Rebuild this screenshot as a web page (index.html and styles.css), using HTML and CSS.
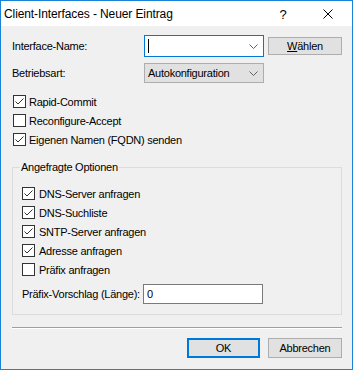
FILE: index.html
```html
<!DOCTYPE html>
<html>
<head>
  <meta charset="UTF-8">
  <link rel="stylesheet" href="styles.css">
  <title>Client-Interfaces - Neuer Eintrag</title>
</head>
<body>
  <div class="window">
    <div class="titlebar">
      <span class="title">Client-Interfaces - Neuer Eintrag</span>
      <span class="tbtn">?</span>
      <span class="tbtn close">
        <svg width="10" height="10" viewBox="0 0 10 10"><path d="M0.5 0.5 L9.5 9.5 M9.5 0.5 L0.5 9.5" stroke="#000" stroke-width="1" fill="none"/></svg>
      </span>
    </div>

    <div class="content">
      <div class="row first">
        <span class="label">Interface-Name:</span>
        <div class="combo focus">
          <span class="caret"></span>
          <svg class="chev" width="9" height="5" viewBox="0 0 9 5"><path d="M0.5 0.5 L4.5 4.5 L8.5 0.5" stroke="#606060" fill="none"/></svg>
        </div>
        <button class="btn pick"><u>W</u>ählen</button>
      </div>

      <div class="row second">
        <span class="label">Betriebsart:</span>
        <div class="combo grey">
          <span class="val">Autokonfiguration</span>
          <svg class="chev" width="9" height="5" viewBox="0 0 9 5"><path d="M0.5 0.5 L4.5 4.5 L8.5 0.5" stroke="#606060" fill="none"/></svg>
        </div>
      </div>

      <div class="checks top">
        <label class="check on"><span class="box"></span>Rapid-Commit</label>
        <label class="check"><span class="box"></span>Reconfigure-Accept</label>
        <label class="check on"><span class="box"></span>Eigenen Namen (FQDN) senden</label>
      </div>

      <fieldset class="group">
        <legend>Angefragte Optionen</legend>
        <label class="check on"><span class="box"></span>DNS-Server anfragen</label>
        <label class="check on"><span class="box"></span>DNS-Suchliste</label>
        <label class="check on"><span class="box"></span>SNTP-Server anfragen</label>
        <label class="check on"><span class="box"></span>Adresse anfragen</label>
        <label class="check"><span class="box"></span>Präfix anfragen</label>
        <div class="row prefix">
          <span class="label narrow">Präfix-Vorschlag (Länge):</span>
          <div class="field">0</div>
        </div>
      </fieldset>

      <div class="sep"></div>

      <div class="buttons">
        <button class="btn default">OK</button>
        <button class="btn">Abbrechen</button>
      </div>
    </div>
  </div>
</body>
</html>
```

FILE: styles.css
```css
html, body {
  margin: 0;
  padding: 0;
  background: #f0f0f0;
}

.window {
  width: 353px;
  height: 370px;
  box-sizing: border-box;
  border: 1px solid #1883d7;
  background: #f0f0f0;
  font-family: "Liberation Sans", Arial, sans-serif;
  font-size: 11px;
  letter-spacing: -0.25px;
  color: #000;
}

.titlebar {
  height: 25px;
  background: #fff;
  display: flex;
  align-items: center;
}

.title {
  flex: 1;
  padding-left: 3px;
  padding-top: 1px;
  font-size: 12px;
  letter-spacing: -0.1px;
}

.tbtn {
  width: 46px;
  height: 25px;
  display: flex;
  align-items: center;
  justify-content: center;
  font-size: 13px;
  padding-top: 1px;
  box-sizing: border-box;
}

.tbtn.close {
  padding-top: 0;
  padding-right: 2px;
}

.content {
  padding: 0 10px 0 11px;
}

.row {
  display: flex;
  align-items: center;
}

.row.first {
  margin-top: 9px;
  height: 22px;
}

.row.second {
  margin-top: 6px;
  height: 20px;
}

.label {
  width: 132px;
  flex: none;
}

.label.narrow {
  width: 121px;
}

.combo {
  width: 120px;
  box-sizing: border-box;
  display: flex;
  align-items: center;
  padding: 0 5px 0 3px;
}

.combo.focus {
  height: 22px;
  border: 1px solid #0078d7;
  background: #fff;
}

.combo.grey {
  height: 20px;
  border: 1px solid #adadad;
  background: #e1e1e1;
}

.caret {
  width: 1px;
  height: 14px;
  background: #000;
  margin-left: 0;
}

.val {
  padding-left: 0;
}

.chev {
  margin-left: auto;
}

.btn {
  font-family: inherit;
  font-size: 11px;
  letter-spacing: -0.25px;
  color: #000;
  background: #e1e1e1;
  border: 1px solid #adadad;
  height: 20px;
  width: 74px;
  padding: 0;
  margin: 0;
}

.btn.pick {
  height: 18px;
  margin-left: 4px;
}

.btn.default {
  width: 73px;
  border: 2px solid #0078d7;
}

.checks.top {
  margin-top: 9px;
}

.check {
  display: flex;
  align-items: center;
  height: 19px;
}

.box {
  width: 13px;
  height: 13px;
  box-sizing: border-box;
  border: 1px solid #333;
  background: #fff;
  margin-left: 1px;
  margin-right: 3px;
  flex: none;
}

.check.on .box {
  background: #fff url("data:image/svg+xml,%3Csvg xmlns='http://www.w3.org/2000/svg' width='11' height='11' viewBox='0 0 11 11'%3E%3Cpath d='M1.5 5.5 L4 8 L9.5 2.5' stroke='%23333' stroke-width='1' fill='none'/%3E%3C/svg%3E") no-repeat 0 0;
}

.group {
  margin: 12px 0 0 0;
  padding: 10px 9px 10px 9px;
  border: 1px solid #dcdcdc;
  width: 330px;
  box-sizing: border-box;
}

.group legend {
  padding: 0 1px;
  margin-left: -2px;
  line-height: 13px;
}

.group .check .box {
  margin-left: 0;
  margin-right: 4px;
}

.row.prefix {
  margin-top: 5px;
  height: 20px;
}

.field {
  width: 120px;
  height: 20px;
  box-sizing: border-box;
  border: 1px solid #7a7a7a;
  background: #fff;
  padding-left: 3px;
  line-height: 18px;
}

.sep {
  margin-top: 12px;
  width: 330px;
  border-top: 1px solid #a0a0a0;
  border-bottom: 1px solid #fff;
}

.buttons {
  margin-top: 9px;
  display: flex;
  justify-content: flex-end;
  gap: 8px;
  width: 330px;
}
```
